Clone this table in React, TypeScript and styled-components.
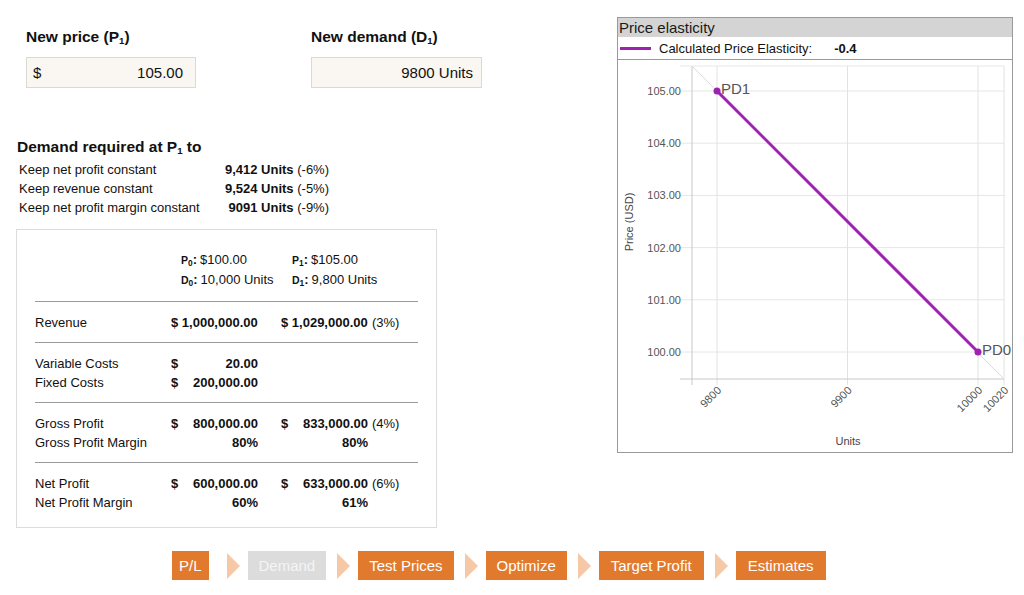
import React from "react";
import styled, { createGlobalStyle } from "styled-components";

const Global = createGlobalStyle`
  html, body { margin: 0; padding: 0; background: #fff; }
  body {
    font-family: "Liberation Sans", Arial, Helvetica, sans-serif;
    color: #111;
    width: 1024px;
    height: 595px;
    overflow: hidden;
  }
`;

const Page = styled.div`
  display: flex;
  align-items: flex-start;
  width: 1024px;
  height: 595px;
`;

const LeftCol = styled.div`
  width: 601px;
  padding: 28px 0 0 16px;
  display: flex;
  flex-direction: column;
`;

const InputsRow = styled.div`
  display: flex;
  margin-left: 10px;
`;

const Field = styled.div<{ $w: number }>`
  width: ${(p) => p.$w}px;
  display: flex;
  flex-direction: column;
`;

const FieldLabel = styled.div`
  font-size: 15.5px;
  font-weight: 700;
  line-height: 18px;
  height: 18px;
  margin-bottom: 11px;
`;

const Sub = styled.sub`
  font-size: 0.62em;
  vertical-align: -0.2em;
  line-height: 0;
`;

const InputBox = styled.div<{ $w: number; $pr: number }>`
  box-sizing: border-box;
  width: ${(p) => p.$w}px;
  height: 31px;
  background: #faf6f1;
  border: 1px solid #dcd8d3;
  display: flex;
  align-items: center;
  justify-content: space-between;
  padding: 0 ${(p) => p.$pr}px 0 6px;
  font-size: 15px;
  color: #111;
`;

const Heading = styled.div`
  margin-top: 50px;
  margin-left: 1px;
  font-size: 15.5px;
  font-weight: 700;
  line-height: 18px;
`;

const ReqList = styled.div`
  margin: 4px 0 0 3px;
  display: grid;
  grid-template-columns: 190px 120px;
  font-size: 13px;
  line-height: 19px;
`;

const ReqValue = styled.div`
  justify-self: end;
  white-space: nowrap;
`;

const B = styled.b`
  font-weight: 700;
`;

const TableBox = styled.div`
  box-sizing: border-box;
  margin-top: 12px;
  width: 421px;
  height: 299px;
  border: 1px solid #dcdcdc;
  padding: 20px 18px 16px;
  font-size: 13px;
`;

const HeadGrid = styled.div`
  display: grid;
  grid-template-columns: 146px 111px auto;
  line-height: 20px;
  padding-bottom: 11px;
  border-bottom: 1px solid #9a9a9a;
  white-space: nowrap;
`;

const Key = styled.b`
  font-size: 10.5px;
  font-weight: 700;
`;

const KeySub = styled.sub`
  font-size: 0.8em;
  vertical-align: -0.2em;
  line-height: 0;
`;

const Colon = styled.b`
  font-weight: 700;
  margin-right: 3px;
`;

const Section = styled.div<{ $last?: boolean }>`
  padding: 11px 0 10px;
  border-bottom: ${(p) => (p.$last ? "none" : "1px solid #9a9a9a")};
`;

const Row = styled.div`
  display: grid;
  grid-template-columns: 136px 87px 23px auto;
  line-height: 19px;
  white-space: nowrap;
`;

const Money = styled.div`
  width: 87px;
  display: flex;
  justify-content: space-between;
  font-weight: 700;
`;

const Right = styled.div`
  width: 87px;
  text-align: right;
  font-weight: 700;
`;

const Col2 = styled.div`
  display: flex;
  align-items: baseline;
`;

const Pct = styled.span`
  margin-left: 4px;
`;

const Nav = styled.nav`
  display: flex;
  align-items: center;
  margin: 23px 0 0 156px;
`;

const Step = styled.div<{ $off?: boolean; $pad: number }>`
  height: 29px;
  display: flex;
  align-items: center;
  padding: 0 ${(p) => p.$pad}px;
  background: ${(p) => (p.$off ? "#dcdcdc" : "#e27a2e")};
  color: ${(p) => (p.$off ? "#f4f4f4" : "#fff")};
  font-size: 15px;
  white-space: nowrap;
`;

const Arrow = styled.div<{ $ml: number }>`
  width: 0;
  height: 0;
  border-top: 13px solid transparent;
  border-bottom: 13px solid transparent;
  border-left: 13px solid #f6c8a6;
  margin: 0 8px 0 ${(p) => p.$ml}px;
`;

const Panel = styled.div`
  box-sizing: border-box;
  margin-top: 17px;
  width: 396px;
  height: 436px;
  border: 1px solid #9a9a9a;
  display: flex;
  flex-direction: column;
  overflow: hidden;
`;

const PanelHeader = styled.div`
  height: 19px;
  background: #d4d4d4;
  font-size: 15px;
  line-height: 19px;
  padding-left: 1px;
  color: #1a1a1a;
`;

const Legend = styled.div`
  box-sizing: border-box;
  height: 23px;
  border-bottom: 1px solid #9a9a9a;
  display: flex;
  align-items: center;
  padding-left: 2px;
  font-size: 13px;
`;

const LegendLine = styled.span`
  width: 31px;
  height: 3px;
  background: #9d22b2;
  margin-right: 8px;
`;

const LegendValue = styled.b`
  margin-left: 22px;
  font-weight: 700;
`;

const ChartSvg = styled.svg`
  display: block;
`;

const PURPLE = "#9d22b2";
const FONT = "Liberation Sans, Arial, sans-serif";
const xs = (u: number) => 717 + (u - 9800) * 1.305;
const ys = (p: number) => 352 - (p - 100) * 52.2;

function Chart() {
  const yTicks = [105, 104, 103, 102, 101, 100];
  const xTicks = [9800, 9900, 10000, 10020];
  const left = 692;
  const right = 1004;
  const top = 66;
  const bottom = 379;
  return (
    <ChartSvg width={394} height={392} viewBox="618 60 394 392">
      <line x1={680} y1={top} x2={right} y2={top} stroke="#e8e8e8" />
      {yTicks.map((t) => (
        <g key={t}>
          <line x1={680} y1={ys(t)} x2={right} y2={ys(t)} stroke="#e6e6e6" />
          <text x={681} y={ys(t) + 4} textAnchor="end" fontSize={11} fill="#555" fontFamily={FONT}>
            {t.toFixed(2)}
          </text>
        </g>
      ))}
      {xTicks.map((t) => (
        <g key={t}>
          <line x1={xs(t)} y1={top} x2={xs(t)} y2={bottom + 6} stroke="#e2e2e2" />
          <text
            transform={`translate(${xs(t) + 5} ${bottom + 12}) rotate(-45)`}
            textAnchor="end"
            fontSize={11}
            fill="#555"
            fontFamily={FONT}
          >
            {t}
          </text>
        </g>
      ))}
      <line x1={left} y1={top} x2={left} y2={bottom + 6} stroke="#c8c8c8" />
      <line x1={680} y1={bottom} x2={right} y2={bottom} stroke="#c8c8c8" />
      <line x1={left} y1={top} x2={right} y2={bottom} stroke="#dcdcdc" />
      <line x1={xs(9800)} y1={ys(105)} x2={xs(10000)} y2={ys(100)} stroke={PURPLE} strokeWidth={3} />
      <circle cx={xs(9800)} cy={ys(105)} r={3.5} fill={PURPLE} />
      <circle cx={xs(10000)} cy={ys(100)} r={3.5} fill={PURPLE} />
      <text x={xs(9800) + 4} y={ys(105) + 3} fontSize={15} fill="#555" fontFamily={FONT}>
        PD1
      </text>
      <text x={xs(10000) + 4} y={ys(100) + 3} fontSize={15} fill="#555" fontFamily={FONT}>
        PD0
      </text>
      <text x={848} y={445} textAnchor="middle" fontSize={11} fill="#444" fontFamily={FONT}>
        Units
      </text>
      <text transform="translate(633 222) rotate(-90)" textAnchor="middle" fontSize={11} fill="#444" fontFamily={FONT}>
        Price (USD)
      </text>
    </ChartSvg>
  );
}

const reqRows = [
  { label: "Keep net profit constant", value: "9,412 Units", pct: "(-6%)" },
  { label: "Keep revenue constant", value: "9,524 Units", pct: "(-5%)" },
  { label: "Keep net profit margin constant", value: "9091 Units", pct: "(-9%)" },
];

const steps = [
  { label: "P/L", pad: 7 },
  { label: "Demand", pad: 11, off: true },
  { label: "Test Prices", pad: 11 },
  { label: "Optimize", pad: 11 },
  { label: "Target Profit", pad: 12 },
  { label: "Estimates", pad: 12 },
];

export default function App() {
  return (
    <>
      <Global />
      <Page>
        <LeftCol>
          <InputsRow>
            <Field $w={285}>
              <FieldLabel>
                New price (P<Sub>1</Sub>)
              </FieldLabel>
              <InputBox $w={170} $pr={12}>
                <span>$</span>
                <span>105.00</span>
              </InputBox>
            </Field>
            <Field $w={200}>
              <FieldLabel>
                New demand (D<Sub>1</Sub>)
              </FieldLabel>
              <InputBox $w={171} $pr={8}>
                <span />
                <span>9800 Units</span>
              </InputBox>
            </Field>
          </InputsRow>

          <Heading>
            Demand required at P<Sub>1</Sub> to
          </Heading>
          <ReqList>
            {reqRows.map((r) => (
              <React.Fragment key={r.label}>
                <div>{r.label}</div>
                <ReqValue>
                  <B>{r.value}</B> {r.pct}
                </ReqValue>
              </React.Fragment>
            ))}
          </ReqList>

          <TableBox>
            <HeadGrid>
              <div />
              <div>
                <Key>
                  P<KeySub>0</KeySub>
                </Key>
                <Colon>:</Colon>$100.00
              </div>
              <div>
                <Key>
                  P<KeySub>1</KeySub>
                </Key>
                <Colon>:</Colon>$105.00
              </div>
              <div />
              <div>
                <Key>
                  D<KeySub>0</KeySub>
                </Key>
                <Colon>:</Colon>10,000 Units
              </div>
              <div>
                <Key>
                  D<KeySub>1</KeySub>
                </Key>
                <Colon>:</Colon>9,800 Units
              </div>
            </HeadGrid>

            <Section>
              <Row>
                <div>Revenue</div>
                <Money>
                  <span>$ 1,000,000.00</span>
                </Money>
                <div />
                <Col2>
                  <Money>
                    <span>$ 1,029,000.00</span>
                  </Money>
                  <Pct>(3%)</Pct>
                </Col2>
              </Row>
            </Section>

            <Section>
              <Row>
                <div>Variable Costs</div>
                <Money>
                  <span>$</span>
                  <span>20.00</span>
                </Money>
              </Row>
              <Row>
                <div>Fixed Costs</div>
                <Money>
                  <span>$</span>
                  <span>200,000.00</span>
                </Money>
              </Row>
            </Section>

            <Section>
              <Row>
                <div>Gross Profit</div>
                <Money>
                  <span>$</span>
                  <span>800,000.00</span>
                </Money>
                <div />
                <Col2>
                  <Money>
                    <span>$</span>
                    <span>833,000.00</span>
                  </Money>
                  <Pct>(4%)</Pct>
                </Col2>
              </Row>
              <Row>
                <div>Gross Profit Margin</div>
                <Right>80%</Right>
                <div />
                <Right>80%</Right>
              </Row>
            </Section>

            <Section $last>
              <Row>
                <div>Net Profit</div>
                <Money>
                  <span>$</span>
                  <span>600,000.00</span>
                </Money>
                <div />
                <Col2>
                  <Money>
                    <span>$</span>
                    <span>633,000.00</span>
                  </Money>
                  <Pct>(6%)</Pct>
                </Col2>
              </Row>
              <Row>
                <div>Net Profit Margin</div>
                <Right>60%</Right>
                <div />
                <Right>61%</Right>
              </Row>
            </Section>
          </TableBox>

          <Nav>
            {steps.map((s, i) => (
              <React.Fragment key={s.label}>
                {i > 0 && <Arrow $ml={i === 1 ? 18 : 11} />}
                <Step $off={s.off} $pad={s.pad}>
                  {s.label}
                </Step>
              </React.Fragment>
            ))}
          </Nav>
        </LeftCol>

        <Panel>
          <PanelHeader>Price elasticity</PanelHeader>
          <Legend>
            <LegendLine />
            Calculated Price Elasticity:
            <LegendValue>-0.4</LegendValue>
          </Legend>
          <Chart />
        </Panel>
      </Page>
    </>
  );
}
